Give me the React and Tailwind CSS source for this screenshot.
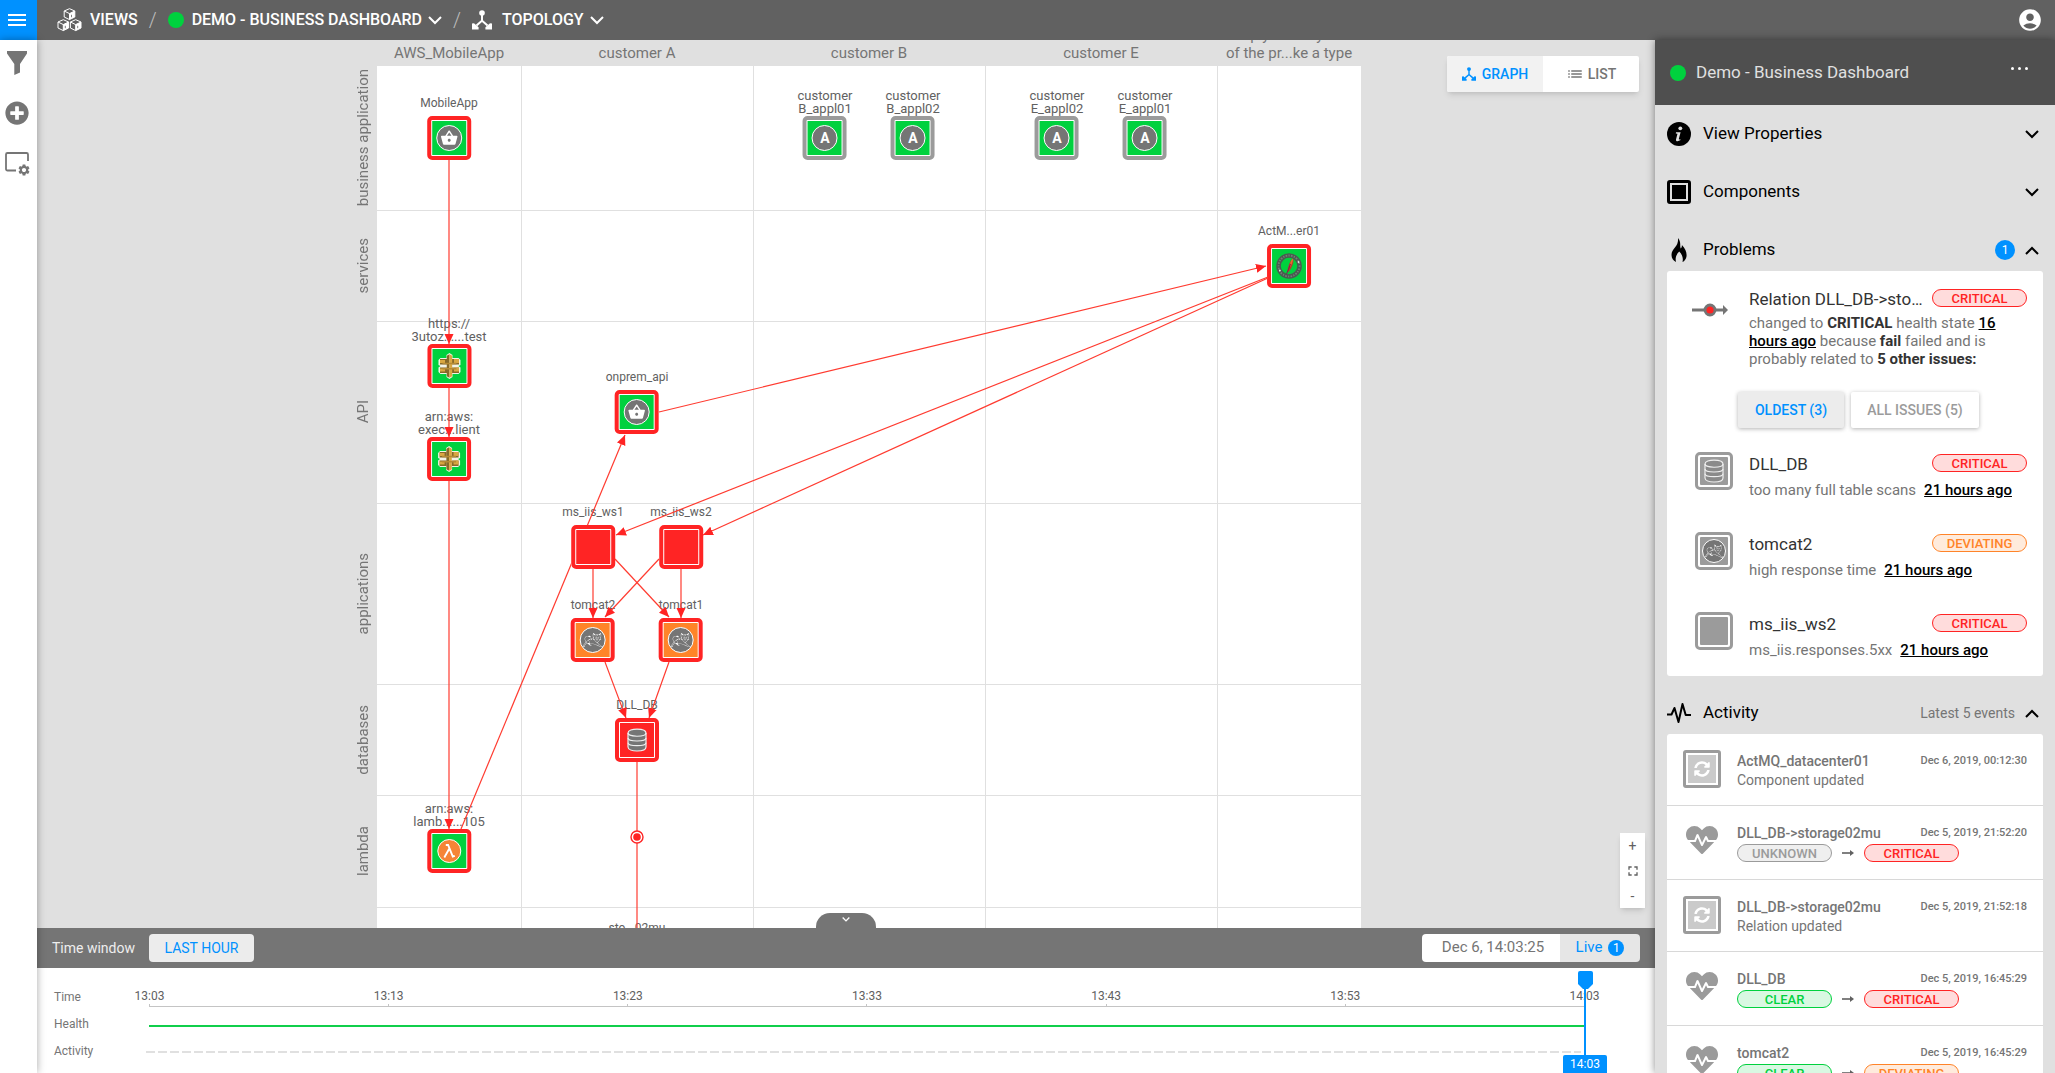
import React from "react";
import {
  MdMenu,
  MdSettings,
  MdAccountCircle,
  MdList,
  MdFullscreen,
  MdShoppingBasket,
} from "react-icons/md";
import { FaPlusCircle, FaHeartbeat, FaSyncAlt } from "react-icons/fa";
import { SiApachetomcat } from "react-icons/si";

/* ---------- icons ---------- */

function Chevron({ up = false, className = "" }) {
  return (
    <svg
      viewBox="0 0 14 9"
      className={"h-[9px] w-3.5 shrink-0 " + className}
      fill="none"
      stroke="currentColor"
      strokeWidth="2"
      aria-hidden="true"
    >
      <path d={up ? "M1 8 7 2l6 6" : "M1 1l6 6 6-6"} />
    </svg>
  );
}

function Cube({ x, y }) {
  return (
    <g transform={`translate(${x} ${y})`}>
      <path d="M6 .7 11.3 3v6L6 11.6.7 9V3z" fill="#616161" stroke="#fff" strokeWidth="1" />
      <path d="M6 5.6 11.3 3v6L6 11.6z" fill="#fff" />
      <path d="M.7 3 6 5.6 11.3 3M6 5.6v6" fill="none" stroke="#fff" strokeWidth="1" />
      <path d="M8 6.8v2.4" stroke="#616161" strokeWidth="0.8" />
    </g>
  );
}

function CubesIcon() {
  return (
    <svg viewBox="0 0 25 24" className="h-6 w-[25px]" aria-hidden="true">
      <Cube x={6.5} y={0} />
      <Cube x={0.3} y={11} />
      <Cube x={12.7} y={11} />
    </svg>
  );
}

function TopologyIcon({ className }) {
  return (
    <svg viewBox="0 0 20 20" className={className} fill="currentColor" aria-hidden="true">
      <circle cx="10" cy="3" r="2.8" />
      <path d="M9 4h2v6.2l5.2 4.6-1.4 1.5L10 12l-4.8 4.3-1.4-1.5L9 10.2z" />
      <path d="M0 19.5v-6l2-.3 4.6 4v2.3zM20 19.5v-6l-2-.3-4.6 4v2.3z" />
    </svg>
  );
}

function FunnelIcon() {
  return (
    <svg viewBox="0 0 20 24" className="h-6 w-5" fill="currentColor" aria-hidden="true">
      <path d="M0 0h20v2.5L13 13v8.5L7.3 24V13L0 2.5z" />
    </svg>
  );
}

function WindowSettingsIcon() {
  return (
    <span className="relative block h-6 w-6">
      <svg viewBox="0 0 24 24" className="h-6 w-6" fill="none" stroke="currentColor" strokeWidth="1.8" aria-hidden="true">
        <path d="M11 19.5H2.5A1.5 1.5 0 0 1 1 18V3.5A1.5 1.5 0 0 1 2.5 2h19A1.5 1.5 0 0 1 23 3.5V10" />
      </svg>
      <MdSettings className="absolute -right-0.5 -bottom-0.5 h-3.5 w-3.5" />
    </span>
  );
}

function FlameIcon() {
  return (
    <svg viewBox="0 0 16 24" className="h-6 w-4" fill="currentColor" aria-hidden="true">
      <path d="M7 0c2 2.6 2.4 4.8 2.2 7.6.1 1.3.2 2 .5 2.9.8-.8 1.3-1.9 1.2-3.5 3.6 3.5 5.1 7.8 4.6 11.4-.4 2.5-1.9 4.6-4 5.6.9-3.7-.2-7.5-3.3-10.4C5.3 16.4 4 20 5 24 2.3 22.8.5 20.300.5 17c0-3 1.5-5 3.4-7.4C6.1 6.8 7.4 4 7 0z" />
    </svg>
  );
}

function PulseIcon() {
  return (
    <svg viewBox="0 0 24 20" className="h-5 w-6" fill="none" stroke="currentColor" strokeWidth="2" strokeLinejoin="round" aria-hidden="true">
      <path d="M0 11.5h4.5L7.5 5l4 14 4-18 3.2 11H24" />
    </svg>
  );
}

function InfoIcon() {
  return (
    <svg viewBox="0 0 24 24" className="h-6 w-6" aria-hidden="true">
      <circle cx="12" cy="12" r="12" fill="#000" />
      <circle cx="13.3" cy="6.3" r="1.9" fill="#e0e0e0" />
      <path d="M9 10.2h4.6l-1.8 6.8c-.1.5.4.5 1.4.2l.4.9c-2.400 1.6-5 1.7-4.600-.6l1.5-5.700-1.700-.4z" fill="#e0e0e0" />
    </svg>
  );
}

function ComponentsIcon() {
  return (
    <svg viewBox="0 0 24 24" className="h-6 w-6" aria-hidden="true">
      <rect x="1.5" y="1.5" width="21" height="21" rx="1.5" fill="#e0e0e0" stroke="#000" strokeWidth="3" />
      <rect x="5" y="5" width="14" height="14" fill="#000" />
    </svg>
  );
}

function DatabaseIcon({ outline = "#eee", body = "#757575" }) {
  return (
    <svg viewBox="0 0 20 24" className="h-6 w-5" aria-hidden="true">
      <path d="M1 5c0-5.300 18-5.300 18 0v14c0 5.300-18 5.300-18 0z" fill={body} stroke={outline} strokeWidth="1.200" />
      <path d="M1 5c0 4.300 18 4.300 18 0M1 10c0 4 18 4 18 0M1 14.700c0 4 18 4 18 0" fill="none" stroke={outline} strokeWidth="1.200" />
    </svg>
  );
}

function GatewayIcon() {
  return (
    <svg viewBox="0 0 24 26" className="h-[26px] w-6" aria-hidden="true">
      <path d="M9 2l3-2 3 2v3l6 0 2 2v5L21 13l2 1.500v4.500L21 21l-6 0v3l-3 2-3-2v-3l-6 0-2-2v-4.500L3 13l-2-1V7l2-2 6 0z" fill="#f3f3e6" />
      <path d="M2.500 6h7v5.500h-7zM2.500 14.500h7V20h-7z" fill="#876929" />
      <path d="M14.500 6h7v5.500h-7zM14.500 14.500h7V20h-7z" fill="#876929" />
      <path d="M2.500 7h5v3h-5zM2.500 15.500h5v3h-5zM16.500 6h5v4h-5zM16.500 14.500h5v4h-5z" fill="#d9a741" />
      <path d="M9.300 2.800 12 1.200v23.600l-2.700-1.600z" fill="#876929" />
      <path d="M14.700 2.800 12 1.200v23.600l2.700-1.600z" fill="#d9a741" />
      <path d="M5 9.700h14v1.500H5zM5 15h14v1.500H5z" fill="#b58a35" />
    </svg>
  );
}

function BrokerIcon() {
  return (
    <svg viewBox="0 0 28 28" className="h-7 w-7" aria-hidden="true">
      <circle cx="14" cy="14" r="10.5" fill="none" stroke="#4a5a50" strokeWidth="4.6" />
      <circle cx="14" cy="14" r="10.5" fill="none" stroke="#9fb0a5" strokeWidth="1.8" strokeDasharray="1.2 1.3 1.6 1.3" strokeOpacity="0.45" />
      <circle cx="4.8" cy="18.5" r="0.9" fill="#dfe8e2" />
      <circle cx="23.5" cy="10" r="0.9" fill="#dfe8e2" />
      <path d="M17.500 6.500c1.800 1.200.8 6-2.500 11.500l-2.200 2.500c-.9-2.500 1-9.800 4.700-14z" fill="#c2352a" />
      <path d="M17.500 6.500c1 1.500-.5 5-2.500 8.500-.3-2.500.5-6 2.500-8.500z" fill="#e0762f" />
      <path d="M15.500 12 11.500 22" stroke="#7d2553" strokeWidth="1" />
    </svg>
  );
}

function RelationIcon() {
  return (
    <svg viewBox="0 0 36 14" className="h-3.5 w-9" aria-hidden="true">
      <path d="M0 7h32" stroke="#757575" strokeWidth="3" />
      <path d="M31 2l5 5-5 5z" fill="#757575" />
      <circle cx="18" cy="7" r="5" fill="#ff2424" stroke="#757575" strokeWidth="2.8" />
    </svg>
  );
}

function ArrowRight() {
  return (
    <svg viewBox="0 0 12 8" className="h-2 w-3 shrink-0" aria-label="changed to">
      <path d="M0 4h9" stroke="#616161" strokeWidth="1.6" />
      <path d="M8 1l4 3-4 3z" fill="#616161" />
    </svg>
  );
}

/* Round glyph carried by components in the graph */
function Disc({ children }) {
  return (
    <span className="flex h-[26px] w-[26px] items-center justify-center rounded-full border border-white bg-[#757575] text-white">
      {children}
    </span>
  );
}

const glyphs = {
  basket: <Disc><MdShoppingBasket className="h-[18px] w-[18px]" /></Disc>,
  app: <Disc><span className="text-sm leading-none font-bold">A</span></Disc>,
  gateway: <GatewayIcon />,
  tomcat: <Disc><SiApachetomcat className="h-5 w-5" /></Disc>,
  database: <DatabaseIcon />,
  broker: <BrokerIcon />,
  lambda: (
    <span className="flex h-6 w-6 items-center justify-center rounded-full border border-white bg-[#f58536] text-white">
      <svg viewBox="0 0 12 14" className="h-3.5 w-3" fill="none" stroke="currentColor" strokeWidth="1.9" aria-hidden="true">
        <path d="M2.500 1h2.300l4.700 11.500 2-.7M5.800 5 1 13.500" />
      </svg>
    </span>
  ),
};

/* ---------- topology data ---------- */

const columns = [
  ["AWS_MobileApp"],
  ["customer A"],
  ["customer B"],
  ["customer E"],
  ["simply dummy text", "of the pr...ke a type"],
];
const rows = ["business application", "services", "API", "applications", "databases", "lambda", ""];

const nodes = [
  { x: 72, y: 72, label: ["MobileApp"], glyph: "basket", fill: "bg-[#00d13e]", ring: "border-[#ff2424]" },
  { x: 448, y: 72, label: ["customer", "B_appl01"], glyph: "app", fill: "bg-[#00d13e]", ring: "border-[#9b9b9b]" },
  { x: 536, y: 72, label: ["customer", "B_appl02"], glyph: "app", fill: "bg-[#00d13e]", ring: "border-[#9b9b9b]" },
  { x: 680, y: 72, label: ["customer", "E_appl02"], glyph: "app", fill: "bg-[#00d13e]", ring: "border-[#9b9b9b]" },
  { x: 768, y: 72, label: ["customer", "E_appl01"], glyph: "app", fill: "bg-[#00d13e]", ring: "border-[#9b9b9b]" },
  { x: 912, y: 200, label: ["ActM...er01"], glyph: "broker", fill: "bg-[#00d13e]", ring: "border-[#ff2424]" },
  { x: 72, y: 300, label: ["https://", "3utoz......test"], glyph: "gateway", fill: "bg-[#00d13e]", ring: "border-[#ff2424]" },
  { x: 72, y: 393, label: ["arn:aws:", "exec...lient"], glyph: "gateway", fill: "bg-[#00d13e]", ring: "border-[#ff2424]" },
  { x: 260, y: 346, label: ["onprem_api"], glyph: "basket", fill: "bg-[#00d13e]", ring: "border-[#ff2424]" },
  { x: 216, y: 481, label: ["ms_iis_ws1"], fill: "bg-[#ff2424]", ring: "border-[#ff2424]" },
  { x: 304, y: 481, label: ["ms_iis_ws2"], fill: "bg-[#ff2424]", ring: "border-[#ff2424]" },
  { x: 216, y: 574, label: ["tomcat2"], glyph: "tomcat", fill: "bg-[#ff8429]", ring: "border-[#ff2424]" },
  { x: 304, y: 574, label: ["tomcat1"], glyph: "tomcat", fill: "bg-[#ff8429]", ring: "border-[#ff2424]" },
  { x: 260, y: 674, label: ["DLL_DB"], glyph: "database", fill: "bg-[#ff2424]", ring: "border-[#ff2424]" },
  { x: 72, y: 785, label: ["arn:aws:", "lamb......105"], glyph: "lambda", fill: "bg-[#00d13e]", ring: "border-[#ff2424]" },
  { x: 260, y: 897, label: ["sto...02mu"], glyph: "database", fill: "bg-[#ff2424]", ring: "border-[#ff2424]" },
];

const edges = [
  [72, 94, 72, 278],
  [72, 322, 72, 371],
  [72, 415, 72, 763],
  [84, 763, 248, 369],
  [282, 346, 889, 200],
  [891, 211, 239, 469],
  [891, 212, 326, 469],
  [216, 503, 216, 552],
  [238, 493, 292, 551],
  [282, 493, 228, 551],
  [304, 503, 304, 552],
  [228, 596, 249, 652],
  [292, 596, 272, 652],
];

function Node({ node }) {
  const twoLine = node.label.length > 1;
  return (
    <button
      type="button"
      style={{ left: node.x, top: node.y + 22 }}
      className="absolute flex -translate-x-1/2 -translate-y-full flex-col items-center"
    >
      <span
        className={
          "flex flex-col whitespace-nowrap text-[#616161] " +
          (twoLine ? "mb-px text-[13px] leading-[13px]" : "mb-1.5 text-xs leading-[13px]")
        }
      >
        {node.label.map((line) => (
          <span key={line}>{line}</span>
        ))}
      </span>
      <span className={"flex h-11 w-11 rounded-[5px] border-4 bg-white p-px " + node.ring}>
        <span className={"flex flex-1 items-center justify-center " + node.fill}>{node.glyph && glyphs[node.glyph]}</span>
      </span>
    </button>
  );
}

function Topology() {
  return (
    <section aria-label="Topology" className="relative min-h-0 flex-1 overflow-hidden bg-[#e0e0e0]">
      <div className="mx-auto grid w-max grid-cols-[46px_984px] grid-rows-[26px_1000px] text-[15px] text-[#757575]">
        <div />
        <div className="grid grid-cols-[144px_232px_232px_232px_144px] grid-rows-[26px]">
          {columns.map((lines) => (
            <div key={lines[0]} className="flex h-[26px] flex-col items-center justify-end pb-1 leading-[18px] whitespace-nowrap">
              {lines.map((line) => (
                <span key={line}>{line}</span>
              ))}
            </div>
          ))}
        </div>
        <div className="grid grid-rows-[144px_111px_182px_181px_111px_112px_1fr]">
          {rows.map((name) => (
            <div key={name} className="flex items-center justify-end pr-1">
              <span className="rotate-180 leading-5 whitespace-nowrap [writing-mode:vertical-rl]">{name}</span>
            </div>
          ))}
        </div>
        <div className="relative grid grid-cols-[144px_232px_232px_232px_144px] grid-rows-[144px_111px_182px_181px_111px_112px_1fr] bg-white">
          {rows.map((row, r) =>
            columns.map((col, c) => (
              <div
                key={r + "-" + c}
                className={"border-[#e0e0e0] " + (c > 0 ? "border-l " : "") + (r > 0 ? "border-t" : "")}
              />
            ))
          )}
          {nodes.map((node) => (
            <Node key={node.x + "-" + node.y} node={node} />
          ))}
          <svg viewBox="0 0 984 1000" className="pointer-events-none absolute inset-0 h-full w-full" aria-hidden="true">
            <defs>
              <marker id="head" viewBox="0 0 10 10" refX="10" refY="5" markerWidth="10" markerHeight="10" markerUnits="userSpaceOnUse" orient="auto">
                <path d="M0 .5 10 5 0 9.500z" fill="#ff2424" />
              </marker>
              <mask id="clear">
                <rect width="984" height="1000" fill="#fff" />
                <rect x="194" y="459" width="44" height="44" fill="#000" />
              </mask>
            </defs>
            <g mask="url(#clear)" stroke="#ff3b30" strokeWidth="1.2">
              {edges.map(([x1, y1, x2, y2]) => (
                <path key={[x1, y1, x2, y2].join()} d={`M${x1} ${y1}L${x2} ${y2}`} markerEnd="url(#head)" />
              ))}
              <path d="M260 696V875" />
            </g>
            <circle cx="260" cy="771" r="6" fill="#fff" stroke="#ff2424" strokeWidth="1.4" />
            <circle cx="260" cy="771" r="3.8" fill="#ff2424" />
          </svg>
        </div>
      </div>

      <div className="absolute top-4 right-4 flex h-9 w-48 overflow-hidden rounded-xs bg-white text-sm font-medium shadow-md">
        <button type="button" aria-pressed="true" className="flex flex-1 items-center justify-center gap-1.5 bg-[#f2f2f2] text-[#0091ff]">
          <TopologyIcon className="h-3.5 w-3.5" />
          GRAPH
        </button>
        <button type="button" className="flex flex-1 items-center justify-center gap-1 text-[#757575]">
          <MdList className="h-[18px] w-[18px]" />
          LIST
        </button>
      </div>

      <div className="absolute right-2.5 bottom-5 flex h-[75px] w-[25px] flex-col bg-white text-[#616161] shadow-md">
        <button type="button" aria-label="Zoom in" className="flex flex-1 items-center justify-center text-sm">+</button>
        <button type="button" aria-label="Fit to screen" className="flex flex-1 items-center justify-center">
          <MdFullscreen className="h-4 w-4" />
        </button>
        <button type="button" aria-label="Zoom out" className="flex flex-1 items-center justify-center text-sm">-</button>
      </div>

      <button
        type="button"
        aria-label="Collapse timeline"
        className="absolute bottom-0 left-1/2 flex h-[15px] w-[60px] -translate-x-1/2 justify-center rounded-t-[14px] bg-[#757575] pt-1 text-white"
      >
        <svg viewBox="0 0 14 9" className="h-[5px] w-2" fill="none" stroke="currentColor" strokeWidth="2.5" aria-hidden="true">
          <path d="M1 1l6 6 6-6" />
        </svg>
      </button>
    </section>
  );
}

/* ---------- timeline ---------- */

const ticks = ["13:03", "13:13", "13:23", "13:33", "13:43", "13:53", "14:03"];

function Timeline() {
  return (
    <section aria-label="Timeline" className="shrink-0">
      <div className="flex h-10 items-center bg-[#757575] pr-[15px] pl-[15px] text-sm">
        <span className="w-[97px] text-[#eeeeee]">Time window</span>
        <button type="button" className="h-7 w-[105px] rounded-sm bg-[#ececec] text-[#0091ff]">
          LAST HOUR
        </button>
        <div className="ml-auto flex h-7 overflow-hidden rounded-sm text-[15px]">
          <input aria-label="Date and time" readOnly value="Dec 6, 14:03:25" className="w-[138px] bg-white pl-1 text-center text-[#757575]" />
          <button type="button" className="flex w-20 items-center justify-center gap-1.5 bg-[#e6e6e6] text-[#0091ff]">
            Live
            <span className="flex h-4 w-4 items-center justify-center rounded-full bg-[#0091ff] text-xs text-white">1</span>
          </button>
        </div>
      </div>
      <div className="flex h-[105px] bg-white pt-[15px] text-xs text-[#757575]">
        <div className="flex w-28 flex-col pl-[17px]">
          <span className="flex h-[27px] items-center">Time</span>
          <span className="flex h-[27px] items-center">Health</span>
          <span className="flex h-[27px] items-center">Activity</span>
        </div>
        <div className="relative mr-[70px] flex flex-1 flex-col">
          <div className="flex h-6 justify-between border-b border-[#c4c4c4]">
            {ticks.map((tick) => (
              <span key={tick} className="flex w-px flex-col items-center justify-between pt-[5px]">
                <span className="leading-4 text-[#616161]">{tick}</span>
                <span className="h-[3px] w-px bg-[#c4c4c4]" />
              </span>
            ))}
          </div>
          <div className="mt-[18px] h-0.5 bg-[#10cf4b]" />
          <div className="mt-6 mr-1 -ml-[3px] h-0.5 bg-[repeating-linear-gradient(to_right,#e0e0e0_0_9px,transparent_9px_12px)]" />
          <div className="absolute -top-3 -right-[22px] flex w-11 flex-col items-center">
            <svg viewBox="0 0 15 18" className="h-[18px] w-[15px]" fill="#0091ff" aria-hidden="true">
              <path d="M2 0h11a2 2 0 0 1 2 2v11l-5 5H5l-5-5V2a2 2 0 0 1 2-2z" />
            </svg>
            <span className="h-[66px] w-0.5 bg-[#0091ff]" />
            <span className="flex h-[18px] w-full items-center justify-center rounded-t-xs bg-[#0091ff] text-white">14:03</span>
          </div>
        </div>
      </div>
    </section>
  );
}

/* ---------- details panel ---------- */

const pillStyles = {
  CRITICAL: "border-[#ff2424] bg-[#ffdcdc] text-[#ff2424]",
  DEVIATING: "border-[#ff8429] bg-[#ffebdc] text-[#ff8429]",
  CLEAR: "border-[#00d13e] bg-[#d9f8e2] text-[#00d13e]",
  UNKNOWN: "border-[#9b9b9b] bg-[#efefef] text-[#9b9b9b]",
};

function Pill({ state }) {
  return (
    <span
      className={
        "flex h-[18px] w-[95px] shrink-0 items-center justify-center rounded-full border text-[13px] leading-none font-medium " +
        pillStyles[state]
      }
    >
      {state}
    </span>
  );
}

function SectionHeader({ icon, title, open = false, children }) {
  return (
    <h2>
      <button type="button" aria-expanded={open} className="flex h-[42px] w-full items-center pr-1 text-[17px] text-black">
        <span className="flex w-6 justify-center">{icon}</span>
        <span className="ml-3 flex-1 text-left">{title}</span>
        {children}
        <Chevron up={open} className="ml-2.5" />
      </button>
    </h2>
  );
}

const issues = [
  { name: "DLL_DB", text: "too many full table scans", state: "CRITICAL", icon: <DatabaseIcon body="#8a8a8a" /> },
  {
    name: "tomcat2",
    text: "high response time",
    state: "DEVIATING",
    icon: (
      <span className="flex h-6 w-6 items-center justify-center rounded-full border border-white bg-[#757575] text-white">
        <SiApachetomcat className="h-[18px] w-[18px]" />
      </span>
    ),
  },
  { name: "ms_iis_ws2", text: "ms_iis.responses.5xx", state: "CRITICAL", icon: null },
];

function Problems() {
  return (
    <div className="rounded-[3px] bg-white pr-4">
      <div className="flex pt-[18px]">
        <div className="flex w-[82px] justify-center pt-3.5 pl-1">
          <RelationIcon />
        </div>
        <div className="min-w-0 flex-1">
          <div className="flex justify-between gap-1">
            <h3 className="truncate text-[17px] leading-5 text-[#333333]">Relation DLL_DB-&gt;storage02mu</h3>
            <Pill state="CRITICAL" />
          </div>
          <p className="mt-[5px] mr-4 text-[15px] leading-[18px] text-[#757575]">
            changed to <b className="font-bold text-[#333333]">CRITICAL</b> health state{" "}
            <a href="#state" className="font-medium text-black underline">16 hours ago</a> because{" "}
            <b className="font-bold text-[#333333]">fail</b> failed and is probably related to{" "}
            <b className="font-bold text-[#333333]">5 other issues:</b>
          </p>
        </div>
      </div>
      <div className="mt-6 flex gap-[7px] pl-[71px] text-sm font-medium">
        <button type="button" aria-pressed="true" className="h-9 w-[106px] rounded-xs bg-[#ececec] text-[#0091ff] shadow-[0_1px_4px_rgba(0,0,0,0.3)]">
          OLDEST (3)
        </button>
        <button type="button" className="h-9 w-32 rounded-xs bg-white text-[#9b9b9b] shadow-[0_1px_4px_rgba(0,0,0,0.3)]">
          ALL ISSUES (5)
        </button>
      </div>
      <ul className="mt-6">
        {issues.map((issue) => (
          <li key={issue.name} className="flex h-20 pl-7 last:h-16">
            <span className="flex h-[38px] w-[38px] shrink-0 rounded-[5px] border-[3px] border-[#9b9b9b] bg-white p-0.5">
              <span className="flex flex-1 items-center justify-center rounded-[1px] bg-[#9b9b9b]">{issue.icon}</span>
            </span>
            <div className="ml-4 flex-1 pt-0.5">
              <div className="flex justify-between">
                <h3 className="text-[17px] leading-5 text-[#333333]">{issue.name}</h3>
                <Pill state={issue.state} />
              </div>
              <p className="mt-1.5 text-[15px] leading-5 text-[#757575]">
                {issue.text}
                <a href="#issue" className="ml-2 font-medium text-black underline">21 hours ago</a>
              </p>
            </div>
          </li>
        ))}
      </ul>
    </div>
  );
}

const events = [
  { name: "ActMQ_datacenter01", time: "Dec 6, 2019, 00:12:30", text: "Component updated" },
  { name: "DLL_DB->storage02mu", time: "Dec 5, 2019, 21:52:20", from: "UNKNOWN", to: "CRITICAL" },
  { name: "DLL_DB->storage02mu", time: "Dec 5, 2019, 21:52:18", text: "Relation updated" },
  { name: "DLL_DB", time: "Dec 5, 2019, 16:45:29", from: "CLEAR", to: "CRITICAL" },
  { name: "tomcat2", time: "Dec 5, 2019, 16:45:29", from: "CLEAR", to: "DEVIATING" },
];

function ActivityList() {
  return (
    <ul className="rounded-[3px] bg-white text-[#757575]">
      {events.map((event) => (
        <li
          key={event.name + event.time}
          className={"flex border-b border-[#d8d8d8] px-4 " + (event.from ? "h-[74px]" : "h-[72px]")}
        >
          <span className="flex w-[38px] shrink-0 justify-center pt-4">
            {event.from ? (
              <FaHeartbeat className="mt-0.5 h-8 w-8 text-[#9b9b9b]" />
            ) : (
              <span className="flex h-[38px] w-[38px] rounded-[3px] border-[3px] border-[#9b9b9b] bg-white p-0.5">
                <span className="flex flex-1 items-center justify-center bg-[#cacaca] text-white">
                  <FaSyncAlt className="h-4 w-4" />
                </span>
              </span>
            )}
          </span>
          <div className="ml-4 flex-1 pt-[18px]">
            <div className="flex items-center justify-between">
              <h3 className="text-sm leading-[18px] font-medium">{event.name}</h3>
              <time className="text-[11px] leading-[18px] font-medium">{event.time}</time>
            </div>
            {event.from ? (
              <div className="mt-0.5 flex items-center gap-2.5">
                <Pill state={event.from} />
                <ArrowRight />
                <Pill state={event.to} />
              </div>
            ) : (
              <p className="text-sm leading-5">{event.text}</p>
            )}
          </div>
        </li>
      ))}
    </ul>
  );
}

function DetailsPanel() {
  return (
    <aside className="z-10 flex w-[400px] shrink-0 flex-col overflow-hidden bg-[#e0e0e0] shadow-[0_0_8px_rgba(0,0,0,0.45)]">
      <header className="flex h-[65px] shrink-0 items-center bg-[#4f4f4f] px-[15px] text-[17px] text-[#e0e0e0]">
        <span className="h-4 w-4 rounded-full bg-[#00d13e]" />
        <h1 className="ml-2.5 flex-1">Demo - Business Dashboard</h1>
        <button type="button" aria-label="More actions" className="mr-3 mb-2 flex gap-1">
          <span className="h-[3px] w-[3px] rounded-full bg-white" />
          <span className="h-[3px] w-[3px] rounded-full bg-white" />
          <span className="h-[3px] w-[3px] rounded-full bg-white" />
        </button>
      </header>
      <div className="flex min-h-0 flex-1 flex-col gap-4 px-3 pt-2">
        <SectionHeader icon={<InfoIcon />} title="View Properties" />
        <SectionHeader icon={<ComponentsIcon />} title="Components" />
        <section>
          <SectionHeader icon={<FlameIcon />} title="Problems" open>
            <span className="flex h-5 w-5 items-center justify-center rounded-full bg-[#0091ff] text-xs text-white">1</span>
          </SectionHeader>
          <Problems />
        </section>
        <section>
          <SectionHeader icon={<PulseIcon />} title="Activity" open>
            <span className="text-sm text-[#757575]">Latest 5 events</span>
          </SectionHeader>
          <ActivityList />
        </section>
      </div>
    </aside>
  );
}

/* ---------- page ---------- */

export default function App() {
  return (
    <div className="flex h-screen flex-col overflow-hidden font-[Roboto,'Liberation_Sans',sans-serif]">
      <header className="flex h-10 shrink-0 items-center bg-[#616161] pr-3 text-base font-medium text-white">
        <button type="button" aria-label="Menu" className="flex h-full w-[37px] items-center justify-center bg-[#0091ff] pr-1">
          <MdMenu className="h-6 w-6" />
        </button>
        <nav aria-label="Breadcrumb" className="ml-5 flex items-center">
          <a href="#views" className="flex items-center gap-2">
            <CubesIcon />
            VIEWS
          </a>
          <span className="mx-[11px] text-xl font-light text-[#bdbdbd]">/</span>
          <button type="button" className="flex items-center gap-2">
            <span className="h-4 w-4 rounded-full bg-[#00d13e]" />
            DEMO - BUSINESS DASHBOARD
            <Chevron className="-ml-0.5" />
          </button>
          <span className="mx-[11px] text-xl font-light text-[#bdbdbd]">/</span>
          <button type="button" className="flex items-center gap-2">
            <TopologyIcon className="mr-0.5 h-5 w-5" />
            TOPOLOGY
            <Chevron className="-ml-0.5" />
          </button>
        </nav>
        <button type="button" aria-label="Account" className="ml-auto">
          <MdAccountCircle className="h-[26px] w-[26px]" />
        </button>
      </header>

      <div className="flex min-h-0 flex-1">
        <nav
          aria-label="Tools"
          className="z-10 flex w-[37px] shrink-0 flex-col items-center gap-[26px] bg-white pt-[11px] pr-1 text-[#757575] shadow-[0_0_8px_rgba(0,0,0,0.35)]"
        >
          <button type="button" aria-label="Filters">
            <FunnelIcon />
          </button>
          <button type="button" aria-label="Add">
            <FaPlusCircle className="h-6 w-6" />
          </button>
          <button type="button" aria-label="View settings">
            <WindowSettingsIcon />
          </button>
        </nav>
        <main className="flex min-w-0 flex-1 flex-col">
          <Topology />
          <Timeline />
        </main>
        <DetailsPanel />
      </div>
    </div>
  );
}
